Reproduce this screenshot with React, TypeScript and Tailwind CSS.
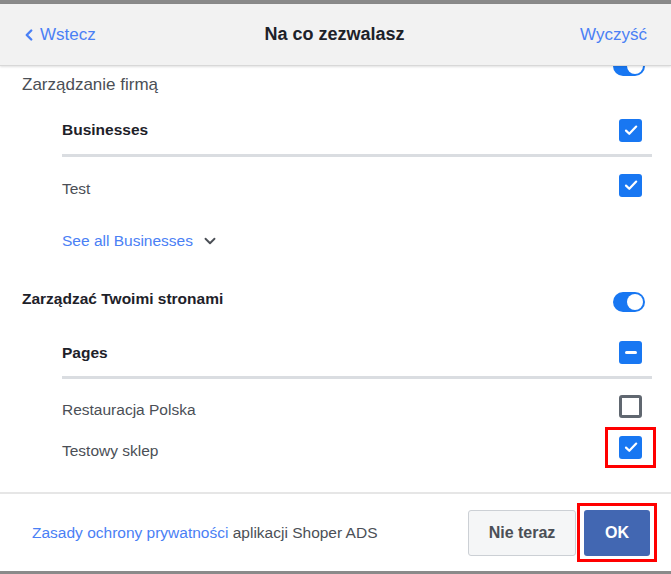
import { ChevronDown, ChevronLeft } from "lucide-react"

const font = "font-['Liberation_Sans',Arial,sans-serif]"

function Toggle({ className = "" }: { className?: string }) {
  return (
    <div className={`relative w-[32px] h-[20px] rounded-full bg-[#1877f2] ${className}`}>
      <div className="absolute right-[2px] top-[2px] w-[16px] h-[16px] rounded-full bg-white" />
    </div>
  )
}

function Check({ state }: { state: "on" | "off" | "mixed" }) {
  if (state === "off") {
    return <div className="w-[23px] h-[23px] rounded-[3px] border-[3px] border-[#606770] bg-white" />
  }
  return (
    <div className="w-[23px] h-[23px] rounded-[3px] bg-[#1877f2] flex items-center justify-center">
      {state === "on" ? (
        <svg width="16" height="16" viewBox="0 0 16 16" fill="none">
          <path d="M3 8.6l3.3 3.2L13.2 4.6" stroke="white" strokeWidth="2.2" strokeLinecap="round" strokeLinejoin="round" />
        </svg>
      ) : (
        <div className="w-[12px] h-[3px] rounded-full bg-white" />
      )}
    </div>
  )
}

function Row({ label, bold, state, h, textShift = "" }: { label: string; bold?: boolean; state: "on" | "off" | "mixed"; h: string; textShift?: string }) {
  return (
    <div className={`flex items-center justify-between pr-[10px] ${h}`}>
      <span className={bold ? "text-[15.5px] font-bold text-[#1d2129]" : `text-[15.5px] text-[#4b4f56] ${textShift}`}>{label}</span>
      <Check state={state} />
    </div>
  )
}

export default function App() {
  return (
    <div className={`w-[671px] h-[574px] flex flex-col bg-white overflow-hidden ${font}`}>
      <div className="h-[4px] bg-[#8a8a8a]" />

      {/* Header */}
      <header className="relative z-10 h-[62px] bg-[#f2f2f2] border-b border-[#d8d8d8] shadow-[0_1px_2px_rgba(0,0,0,0.12)] flex items-center pl-[22px] pr-[24px]">
        <a className="flex items-center gap-[2px] text-[17px] text-[#4a80f5] w-[130px]">
          <ChevronLeft size={18} strokeWidth={3.2} className="-ml-[2px]" />
          Wstecz
        </a>
        <h1 className="flex-1 text-center text-[18px] font-bold text-[#1d2129]">Na co zezwalasz</h1>
        <a className="w-[130px] text-right text-[17px] text-[#4a80f5]">Wyczyść</a>
      </header>

      {/* Scrolled content */}
      <div className="flex-1 overflow-hidden pl-[22px]">
        <div className="h-[40px] flex items-start justify-between pr-[26px]">
          <span className="mt-[6px] text-[17px] text-[#4b4f56]">Zarządzanie firmą</span>
          <Toggle className="-mt-[10px]" />
        </div>

        <div className="ml-[40px] mr-[19px]">
          <Row label="Businesses" bold state="on" h="h-[48px]" />
          <div className="h-[3px] bg-[#dadde1]" />
          <Row label="Test" state="on" h="h-[56px]" textShift="pt-[7px]" />
          <div className="h-[56px] flex items-center gap-[8px] text-[15.5px] text-[#4a80f5]">
            See all Businesses
            <ChevronDown size={18} strokeWidth={2.5} className="text-[#4b4f56]" />
          </div>
        </div>

        <div className="h-[60px] flex items-center justify-between pr-[26px]">
          <span className="text-[15.5px] font-bold text-[#1d2129]">Zarządzać Twoimi stronami</span>
          <Toggle className="mt-[6px]" />
        </div>

        <div className="ml-[40px] mr-[19px]">
          <Row label="Pages" bold state="mixed" h="h-[47px]" />
          <div className="h-[3px] bg-[#dadde1]" />
          <Row label="Restauracja Polska" state="off" h="h-[54px]" textShift="pt-[7px]" />
          <div className="flex items-center justify-between h-[28px] pr-[10px]">
            <span className="text-[15.5px] text-[#4b4f56] pt-[8px]">Testowy sklep</span>
            <div className="relative">
              <Check state="on" />
              <div className="absolute -left-[14px] -top-[9px] w-[51px] h-[41px] border-[3px] border-[#ff0000]" />
            </div>
          </div>
        </div>
      </div>

      {/* Footer */}
      <footer className="h-[79px] border-t-2 border-[#e6e6e6] flex items-center justify-between pl-[32px] pr-[21px]">
        <p className="text-[15.5px] text-[#4b4f56]">
          <span className="text-[#4a80f5]">Zasady ochrony prywatności</span> aplikacji Shoper ADS
        </p>
        <div className="flex items-center gap-[8px]">
          <button className="w-[108px] h-[46px] rounded-[3px] border border-[#ccd0d5] bg-[#f5f6f7] text-[16px] font-bold text-[#4b4f56]">
            Nie teraz
          </button>
          <div className="relative">
            <button className="w-[66px] h-[46px] rounded-[3px] bg-[#4267b2] text-[16px] font-bold text-white">OK</button>
            <div className="absolute -left-[7px] -top-[7px] w-[80px] h-[59px] border-[3px] border-[#ff0000]" />
          </div>
        </div>
      </footer>
      <div className="h-[3px] bg-[#8a8a8a]" />
    </div>
  )
}
